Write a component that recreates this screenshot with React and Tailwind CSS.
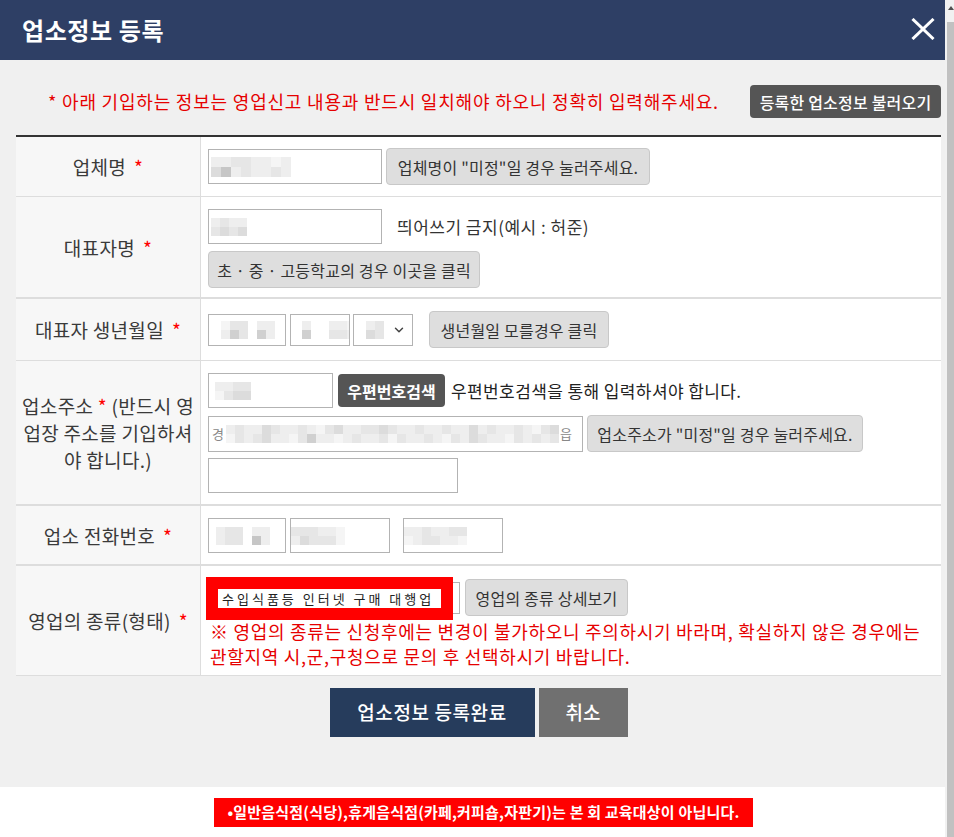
import React from "react";
import { ChevronDown } from "lucide-react";

const SHADES = {
  a: "#f5f5f5",
  b: "#eeeeee",
  c: "#e6e6e6",
  d: "#dcdcdc",
  e: "#d0d0d0",
  f: "#c6c6c6",
  ".": "transparent",
};

function Pix({ rows, size = 9 }) {
  return (
    <div className="flex flex-col">
      {rows.map((r, i) => (
        <div key={i} className="flex">
          {r.split("").map((c, j) => (
            <div key={j} style={{ width: size, height: size, background: SHADES[c] }} />
          ))}
        </div>
      ))}
    </div>
  );
}

function Star() {
  return <span className="text-[#ff0000] ml-[8px]">*</span>;
}

function GrayBtn({ children, className = "" }) {
  return (
    <button
      className={
        "h-[37px] shrink-0 rounded-[4px] border border-[#c8c8c8] bg-[#dedede] text-[16px] tracking-[0.2px] text-[#333] whitespace-nowrap " +
        className
      }
    >
      {children}
    </button>
  );
}

function Box({ className = "", children }) {
  return (
    <div
      className={
        "shrink-0 border border-[#b3b3b3] bg-white flex items-center overflow-hidden " + className
      }
    >
      {children}
    </div>
  );
}

function Row({ label, children, className = "", border = "border-b" }) {
  return (
    <div className={"grid grid-cols-[185px_1fr] border-[#dddddd] " + border}>
      <div className="bg-[#f7f7f7] border-r border-[#dddddd] flex items-center justify-center text-center text-[19px] tracking-[0.3px] text-[#3a3a3a] leading-[27px]">
        {label}
      </div>
      <div className={"pl-[7px] " + className}>{children}</div>
    </div>
  );
}

export default function App() {
  return (
    <div className="w-[954px] h-[837px] flex overflow-hidden font-['Noto_Sans_CJK_KR','Noto_Sans',sans-serif]">
      <div className="w-[945px] shrink-0 flex flex-col">
        {/* header */}
        <header className="h-[60px] shrink-0 bg-[#2e3f65] flex items-center justify-between pl-[22px] pr-[10px]">
          <h1 className="text-white text-[24px] tracking-[0.6px] font-semibold leading-none">업소정보 등록</h1>
          <svg width="24" height="22" viewBox="0 0 24 22" className="mt-[-2px]">
            <line x1="1.5" y1="1" x2="22.5" y2="21" stroke="white" strokeWidth="3" />
            <line x1="22.5" y1="1" x2="1.5" y2="21" stroke="white" strokeWidth="3" />
          </svg>
        </header>

        {/* body */}
        <main className="h-[727px] shrink-0 bg-[#f0f0f0] pl-[16px] pr-[4px]">
          <div className="h-[75px] pt-[25px] flex items-start justify-between">
            <p className="pl-[32px] text-[18px] tracking-[0.8px] text-[#e60000] leading-[33px] whitespace-nowrap">
              * 아래 기입하는 정보는 영업신고 내용과 반드시 일치해야 하오니 정확히 입력해주세요.
            </p>
            <button className="h-[33px] w-[191px] rounded-[4px] bg-[#555555] text-white text-[16px] tracking-[0.2px] font-medium whitespace-nowrap">
              등록한 업소정보 불러오기
            </button>
          </div>

          <div className="border-t-2 border-[#333333] bg-white">
            {/* 업체명 */}
            <Row
              label={<span>업체명<Star /></span>}
              className="py-[11px] flex items-center gap-[4px]"
            >
              <Box className="w-[174px] h-[35px] pl-[2px]">
                <Pix rows={["bbccbbab", "dfbcbbcb"]} size={10} />
              </Box>
              <GrayBtn className="w-[264px]">업체명이 "미정"일 경우 눌러주세요.</GrayBtn>
            </Row>

            {/* 대표자명 */}
            <Row
              label={<span>대표자명<Star /></span>}
              border="border-b-2"
              className="pt-[12px] pb-[9px] flex flex-col gap-[7px]"
            >
              <div className="flex items-center">
                <Box className="w-[174px] h-[35px] pl-[2px]">
                  <Pix rows={["bcbb.", "cdcd."]} size={9} />
                </Box>
                <span className="ml-[15px] text-[17px] tracking-[0.5px] text-[#333] whitespace-nowrap">
                  띄어쓰기 금지(예시 : 허준)
                </span>
              </div>
              <GrayBtn className="w-[272px]">초 · 중 · 고등학교의 경우 이곳을 클릭</GrayBtn>
            </Row>

            {/* 대표자 생년월일 */}
            <Row
              label={<span>대표자 생년월일<Star /></span>}
              className="py-[12px] flex items-center"
            >
              <Box className="w-[78px] h-[32px] pl-[12px]">
                <Pix rows={["acc.bb", "bec.eb"]} size={9} />
              </Box>
              <Box className="w-[60px] h-[32px] ml-[4px] pl-[11px]">
                <Pix rows={["b..bba", "e..ccb"]} size={9} />
              </Box>
              <Box className="w-[60px] h-[32px] ml-[3px] pl-[12px] pr-[6px] justify-between">
                <Pix rows={["bc", "dc"]} size={9} />
                <ChevronDown size={14} strokeWidth={2.5} className="text-[#444]" />
              </Box>
              <GrayBtn className="w-[180px] h-[36px] ml-[16px]">생년월일 모를경우 클릭</GrayBtn>
            </Row>

            {/* 업소주소 */}
            <Row
              label={
                <span className="whitespace-nowrap">
                  업소주소 <span className="text-[#ff0000]">*</span> (반드시 영
                  <br />
                  업장 주소를 기입하셔
                  <br />
                  야 합니다.)
                </span>
              }
              border="border-b-2"
              className="pt-[12px] pb-[11px] flex flex-col"
            >
              <div className="flex items-center h-[35px]">
                <Box className="w-[125px] h-[35px] pl-[6px]">
                  <Pix rows={["bbcc.", "acdd."]} size={9} />
                </Box>
                <button className="ml-[5px] w-[107px] h-[33px] rounded-[4px] bg-[#555555] text-white text-[16px] font-bold whitespace-nowrap">
                  우편번호검색
                </button>
                <span className="ml-[6px] text-[17px] tracking-[0.4px] text-[#222] whitespace-nowrap">
                  우편번호검색을 통해 입력하셔야 합니다.
                </span>
              </div>
              <div className="flex items-center mt-[7px]">
                <Box className="w-[375px] h-[36px] pl-[3px]">
                  <span className="text-[13px] text-[#888] mr-[2px]">경</span>
                  <Pix
                    rows={[
                      "bcbbdcbbcbacdbbccdcbbcbbcbbdbcbbcbacd",
                      "acbcdbbacebbabcbbcacbbcbacbdcbbacbcbc",
                    ]}
                    size={9}
                  />
                  <span className="text-[13px] text-[#888] ml-[1px]">읍</span>
                </Box>
                <GrayBtn className="ml-[4px] w-[276px] h-[36px]">업소주소가 "미정"일 경우 눌러주세요.</GrayBtn>
              </div>
              <Box className="w-[250px] h-[35px] mt-[6px]" />
            </Row>

            {/* 업소 전화번호 */}
            <Row
              label={<span>업소 전화번호<Star /></span>}
              border="border-b-2"
              className="pt-[12px] pb-[11px] flex items-center"
            >
              <Box className="w-[78px] h-[35px] pl-[7px]">
                <Pix rows={["bcc.bb", "bcc.fb"]} size={9} />
              </Box>
              <Box className="w-[100px] h-[35px] ml-[4px]">
                <Pix rows={["cccbba", "bdccca"]} size={9} />
              </Box>
              <Box className="w-[100px] h-[35px] ml-[13px]">
                <Pix rows={["bbcbbcc", "abccbba"]} size={9} />
              </Box>
            </Row>

            {/* 영업의 종류 */}
            <Row
              label={<span>영업의 종류(형태)<Star /></span>}
              className="pt-[13px] pb-[6px] flex flex-col"
            >
              <div className="flex items-center">
                <div className="relative w-[252px] h-[32px] shrink-0">
                  <div className="w-full h-full border border-[#b3b3b3] bg-white" />
                  <div className="absolute left-[-2px] top-[-5px] w-[247px] h-[43px] bg-[#ff0000] flex items-center justify-center">
                    <div className="w-[223px] h-[19px] bg-white flex items-center pl-[4px] text-[13px] tracking-[3px] text-[#222] whitespace-nowrap leading-none">
                      수입식품등 인터넷 구매 대행업
                    </div>
                  </div>
                </div>
                <GrayBtn className="ml-[5px] w-[163px] h-[35px]">영업의 종류 상세보기</GrayBtn>
              </div>
              <p className="mt-[3px] pl-[2px] text-[18px] tracking-[0.7px] text-[#e60000] leading-[25px] whitespace-nowrap">
                ※ 영업의 종류는 신청후에는 변경이 불가하오니 주의하시기 바라며, 확실하지 않은 경우에는
                <br />
                관할지역 시,군,구청으로 문의 후 선택하시기 바랍니다.
              </p>
            </Row>
          </div>

          <div className="mt-[12px] flex justify-center gap-[4px]">
            <button className="w-[205px] h-[49px] bg-[#263c5c] text-white text-[19px] tracking-[0.6px] font-medium whitespace-nowrap">
              업소정보 등록완료
            </button>
            <button className="w-[89px] h-[49px] bg-[#707070] text-white text-[19px] font-medium">
              취소
            </button>
          </div>
        </main>

        {/* footer */}
        <footer className="flex-1 bg-white flex justify-center pt-[11px] pl-[22px]">
          <div className="w-[539px] h-[29px] bg-[#ff0000] flex items-center justify-center text-white text-[15px] font-bold tracking-[0.2px] whitespace-nowrap">
            •일반음식점(식당),휴게음식점(카페,커피숍,자판기)는 본 회 교육대상이 아닙니다.
          </div>
        </footer>
      </div>

      {/* scrollbar */}
      <div className="w-[9px] shrink-0 bg-[#f1f1f1] flex flex-col">
        <div className="h-[22px] flex items-start justify-center pt-[6px] pl-[2px]">
          <div className="w-0 h-0 border-l-[3px] border-r-[3px] border-b-[4px] border-l-transparent border-r-transparent border-b-[#505050]" />
        </div>
        <div className="flex-1 ml-[2px] bg-[#c1c1c1]" />
      </div>
    </div>
  );
}
